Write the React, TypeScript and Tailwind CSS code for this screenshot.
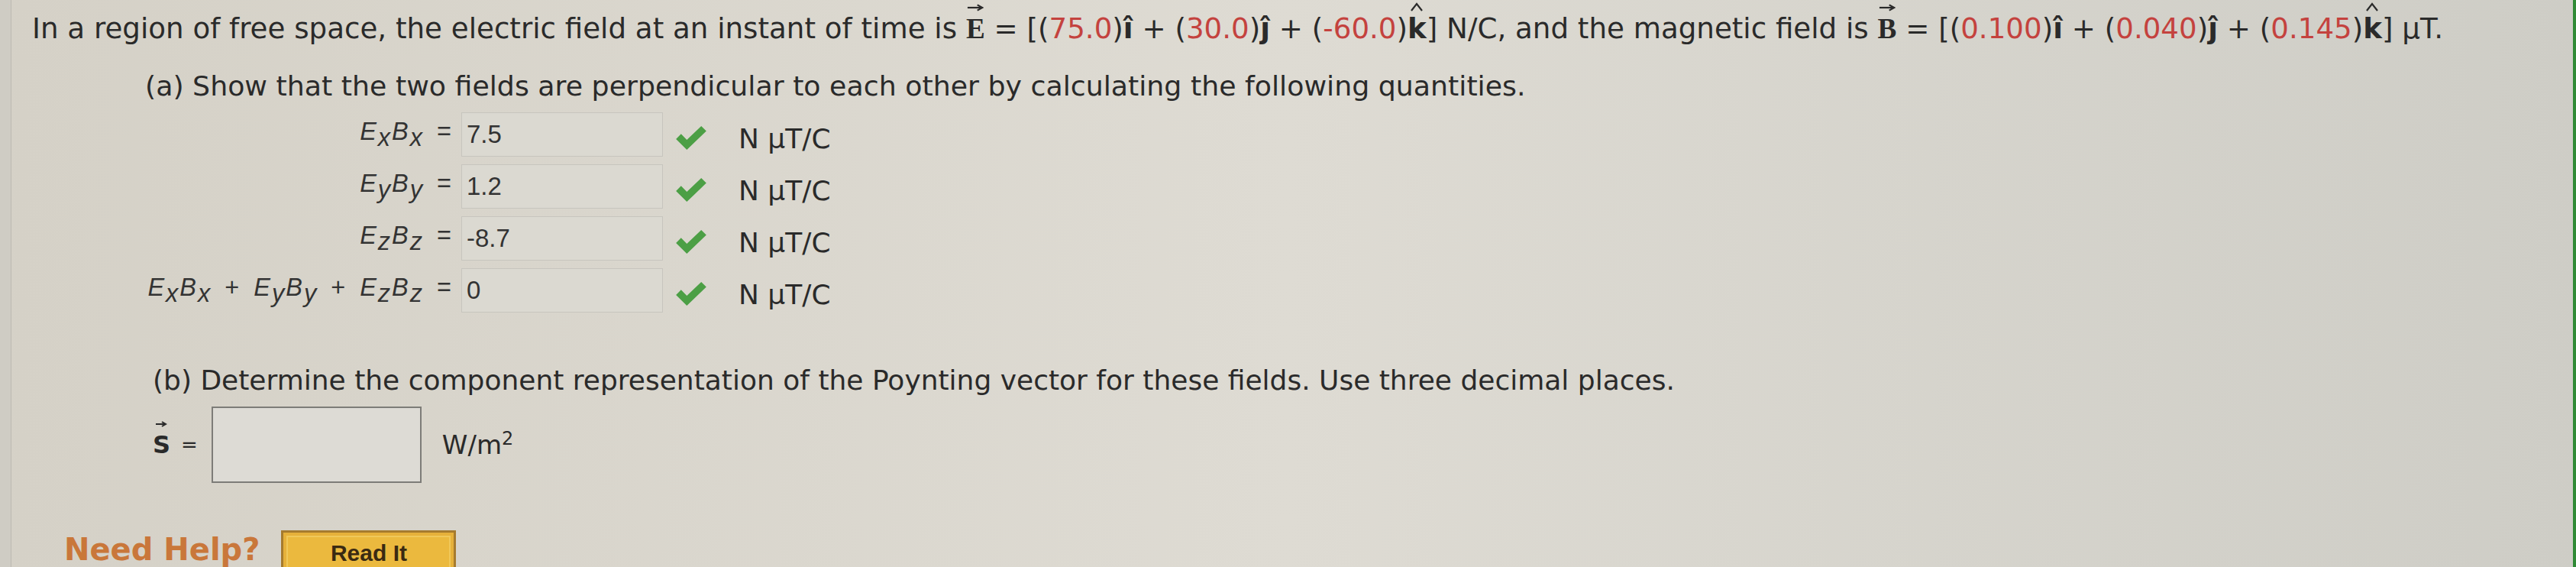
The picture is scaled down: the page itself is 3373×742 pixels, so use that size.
import React from "react";

const Red: React.FC<{ children: React.ReactNode }> = ({ children }) => (
  <span className="text-[#c4423e]">{children}</span>
);

const Vec: React.FC<{ letter: string }> = ({ letter }) => (
  <span className="relative inline-block font-['Liberation_Serif'] font-bold">
    {letter}
    <svg
      viewBox="0 0 24 10"
      className="absolute left-[1px] -top-[11px] h-[10px] w-[22px]"
    >
      <path d="M1 5 H20" stroke="#2a2a2a" strokeWidth="2.4" />
      <path d="M15 1 L22 5 L15 9" fill="none" stroke="#2a2a2a" strokeWidth="2.4" />
    </svg>
  </span>
);

// bold k with a tall hat drawn above it
const KHat: React.FC = () => (
  <span className="relative inline-block font-bold">
    k
    <svg viewBox="0 0 18 12" className="absolute left-[3px] -top-[12px] h-[12px] w-[18px]">
      <path d="M2 11 L9 2 L16 11" fill="none" stroke="#2a2a2a" strokeWidth="2.2" />
    </svg>
  </span>
);

const Sub: React.FC<{ children: React.ReactNode }> = ({ children }) => (
  <span className="align-[-0.24em]">{children}</span>
);

const Pair: React.FC<{ a: string }> = ({ a }) => (
  <span>
    E<Sub>{a}</Sub>B<Sub>{a}</Sub>
  </span>
);

const Op: React.FC<{ children: React.ReactNode }> = ({ children }) => (
  <span className="mx-[17px] not-italic">{children}</span>
);

const Check: React.FC = () => (
  <svg viewBox="0 0 44 36" className="h-[34px] w-[44px]">
    <path d="M1 19 L8 12 L16 20 L36 1 L43 8 L16 34 Z" fill="#4c9f45" />
  </svg>
);

type Row = { label: React.ReactNode; value: string };

const rows: Row[] = [
  { label: <><Pair a="x" /><Op>=</Op></>, value: "7.5" },
  { label: <><Pair a="y" /><Op>=</Op></>, value: "1.2" },
  { label: <><Pair a="z" /><Op>=</Op></>, value: "-8.7" },
  {
    label: (
      <>
        <Pair a="x" />
        <Op>+</Op>
        <Pair a="y" />
        <Op>+</Op>
        <Pair a="z" />
        <Op>=</Op>
      </>
    ),
    value: "0",
  },
];

export default function App() {
  return (
    <div className="flex h-[742px] w-[3373px] overflow-hidden bg-linear-to-r from-[#d5d1c7] via-[#dedbd3] to-[#cecdc6] font-['DejaVu_Sans',sans-serif] text-[#2a2a2a]">
      <div className="w-[14px] shrink-0 bg-[#cfccc4]" />
      <div className="flex-1 border-l border-[#bdbab2] pl-[27px] pt-[15px]">
        <p className="whitespace-nowrap text-[37.2px] leading-[44px]">
          In a region of free space, the electric field at an instant of time is{" "}
          <Vec letter="E" /> = [(<Red>75.0</Red>)<b>î</b> + (<Red>30.0</Red>)<b>ĵ</b> + (
          <Red>-60.0</Red>)<KHat />] N/C, and the magnetic field is <Vec letter="B" /> = [(
          <Red>0.100</Red>)<b>î</b> + (<Red>0.040</Red>)<b>ĵ</b> + (<Red>0.145</Red>)
          <KHat />] μT.
        </p>

        <div className="mt-[31px] pl-[148px]">
          <p className="whitespace-nowrap text-[36.3px] leading-[44px]">
            (a) Show that the two fields are perpendicular to each other by calculating the
            following quantities.
          </p>

          <div className="mt-[12px] flex flex-col gap-[10px]">
            {rows.map((r, i) => (
              <div key={i} className="flex h-[58px] items-center">
                <div className="-mr-[17px] w-[420px] whitespace-nowrap text-right font-['Liberation_Sans',sans-serif] text-[32.5px] italic tracking-[2px] text-[#333]">
                  {r.label}
                </div>
                <div className="ml-[11px] flex h-[58px] w-[264px] items-center border border-[#c7c5be] bg-[#dbd9d1] pl-[6px] font-['Liberation_Sans',sans-serif] text-[33px] text-[#333]">
                  {r.value}
                </div>
                <div className="ml-[15px] mt-[10px]">
                  <Check />
                </div>
                <div className="ml-[40px] mt-[12px] text-[36px]">N μT/C</div>
              </div>
            ))}
          </div>
        </div>

        <div className="mt-[67px] pl-[158px]">
          <p className="whitespace-nowrap text-[36px] leading-[44px]">
            (b) Determine the component representation of the Poynting vector for these fields.
            Use three decimal places.
          </p>
          <div className="mt-[12px] flex items-center">
            <span className="relative inline-block text-[32px] font-bold">
              S
              <svg viewBox="0 0 16 8" className="absolute left-[3px] -top-[7px] h-[8px] w-[16px]">
                <path d="M1 4 H13" stroke="#2a2a2a" strokeWidth="2" />
                <path d="M9 1 L14 4 L9 7" fill="none" stroke="#2a2a2a" strokeWidth="2" />
              </svg>
            </span>
            <span className="ml-[14px] text-[26px]">=</span>
            <div className="ml-[18px] h-[100px] w-[275px] border-2 border-[#7d7c78] bg-[#dddbd5]" />
            <span className="ml-[27px] text-[34px]">
              W/m<sup className="text-[24px]">2</sup>
            </span>
          </div>
        </div>

        <div className="mt-[62px] flex items-start pl-[42px]">
          <span className="mt-[5px] whitespace-nowrap text-[40px] font-bold leading-[40px] text-[#c9773a]">
            Need Help?
          </span>
          <div className="ml-[28px] h-[64px] w-[229px] border-[3px] border-[#a67b2e] bg-[#e6b13a] p-[4px]">
            <div className="flex h-full items-start justify-center border-2 border-[#f0c85a] bg-[#ebb93e] pt-[4px] font-['Liberation_Sans',sans-serif] text-[30px] font-bold leading-[34px] text-[#3a2a12]">
              Read It
            </div>
          </div>
        </div>
      </div>
      <div className="w-[4px] shrink-0 bg-[#2f8a35]" />
    </div>
  );
}
